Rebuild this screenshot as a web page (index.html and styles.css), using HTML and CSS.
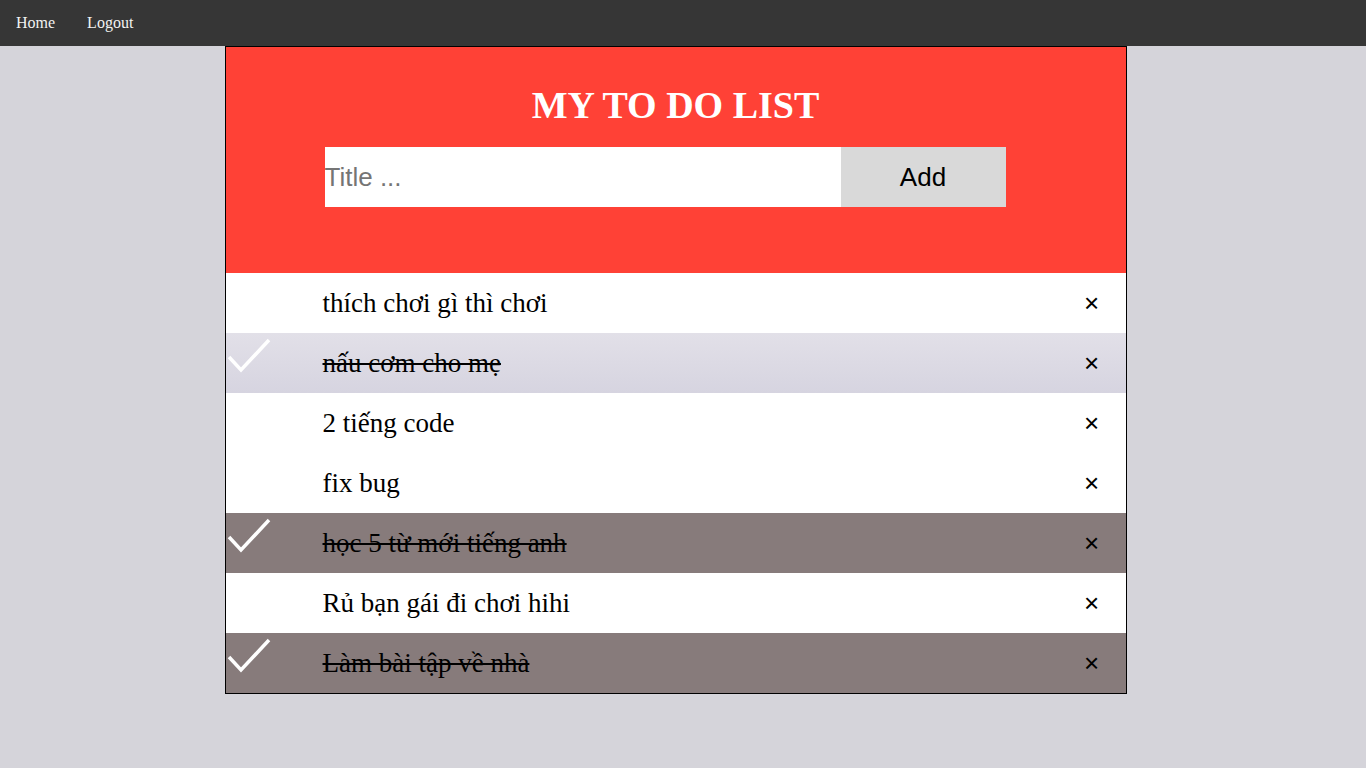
FILE: index.html
```html
<!DOCTYPE html>
<html lang="vi">
<head>
<meta charset="utf-8">
<title>My To Do List</title>
<link rel="stylesheet" href="styles.css">
</head>
<body>
<nav class="topnav">
  <a class="nav-link" href="#">Home</a>
  <a class="nav-link" href="#">Logout</a>
</nav>
<main class="page">
  <section class="todo">
    <header class="todo-header">
      <h2 class="todo-title">MY TO DO LIST</h2>
      <div class="add-row">
        <input class="title-input" type="text" placeholder="Title ...">
        <button class="add-btn" type="button">Add</button>
      </div>
    </header>
    <ul class="todo-list">
      <li class="item"><span class="item-text">thích chơi gì thì chơi</span><span class="close">×</span></li>
      <li class="item checked hover"><svg class="check" viewBox="0 0 46 40" width="46" height="40"><polyline points="3,24 15,37 43,7" fill="none" stroke="#fff" stroke-width="3.5"/></svg><span class="item-text">nấu cơm cho mẹ</span><span class="close">×</span></li>
      <li class="item"><span class="item-text">2 tiếng code</span><span class="close">×</span></li>
      <li class="item"><span class="item-text">fix bug</span><span class="close">×</span></li>
      <li class="item checked"><svg class="check" viewBox="0 0 46 40" width="46" height="40"><polyline points="3,24 15,37 43,7" fill="none" stroke="#fff" stroke-width="3.5"/></svg><span class="item-text">học 5 từ mới tiếng anh</span><span class="close">×</span></li>
      <li class="item"><span class="item-text">Rủ bạn gái đi chơi hihi</span><span class="close">×</span></li>
      <li class="item checked"><svg class="check" viewBox="0 0 46 40" width="46" height="40"><polyline points="3,24 15,37 43,7" fill="none" stroke="#fff" stroke-width="3.5"/></svg><span class="item-text">Làm bài tập về nhà</span><span class="close">×</span></li>
    </ul>
  </section>
</main>
</body>
</html>
```
FILE: styles.css
```css
html, body {
  margin: 0;
  padding: 0;
}
body {
  background: #d5d4da;
  font-family: "Liberation Serif", "Times New Roman", serif;
  min-height: 900px;
}
.topnav {
  background: #363636;
  display: flex;
  height: 46px;
}
.nav-link {
  color: #f2f2f2;
  text-decoration: none;
  font-size: 16px;
  line-height: 18px;
  padding: 14px 16px;
}
.page {
  display: flex;
  justify-content: center;
  padding-right: 15px;
}
.todo {
  width: 900px;
  border: 1px solid #000;
  background: #fff;
}
.todo-header {
  background: #ff4136;
  height: 226px;
  box-sizing: border-box;
  padding-top: 36px;
}
.todo-title {
  margin: 0 0 20px;
  color: #fff;
  text-align: center;
  font-size: 38px;
  line-height: 44px;
  font-weight: bold;
}
.add-row {
  display: flex;
  padding-left: 99px;
  height: 60px;
}
.title-input {
  width: 516px;
  height: 60px;
  box-sizing: border-box;
  border: none;
  margin: 0;
  padding: 0;
  font-family: "Liberation Sans", Arial, sans-serif;
  font-size: 26px;
  background: #fff;
  outline: none;
}
.title-input::placeholder {
  color: #757575;
}
.add-btn {
  width: 165px;
  height: 60px;
  border: none;
  margin: 0;
  background: #d9d9d9;
  font-family: "Liberation Sans", Arial, sans-serif;
  font-size: 26px;
  color: #000;
}
.todo-list {
  list-style: none;
  margin: 0;
  padding: 0;
}
.item {
  position: relative;
  display: flex;
  align-items: center;
  height: 60px;
  padding-left: 97px;
  font-size: 27px;
  color: #000;
  background: #fff;
}
.item-text {
  flex: 1;
}
.checked {
  background: #877b7b;
}
.checked .item-text {
  text-decoration: line-through;
}
.hover {
  background: linear-gradient(#e2e0e8, #d6d4e0);
}
.check {
  position: absolute;
  left: 0;
  top: 0;
}
.close {
  width: 68px;
  text-align: center;
  font-family: "Liberation Sans", Arial, sans-serif;
  font-size: 26px;
}
```
